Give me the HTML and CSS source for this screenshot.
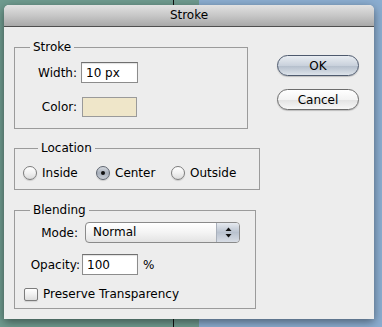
FILE: index.html
```html
<!DOCTYPE html>
<html lang="en">
  <head>
    <meta charset="UTF-8" />
    <meta name="viewport" content="width=device-width, initial-scale=1.0" />
    <title>Stroke</title>
    <link rel="stylesheet" href="styles.css">
  </head>
  <body>
    <div class="dialog">
      <header class="titlebar">Stroke</header>
      <main class="dialog-content">
        <div class="panels">
          <fieldset class="group group-stroke">
            <legend>Stroke</legend>
            <div class="stroke-grid">
              <label class="field-label" for="stroke-width">Width:</label>
              <input id="stroke-width" class="text-input input-width" type="text" value="10 px" />
              <span class="field-label">Color:</span>
              <span class="swatch"></span>
            </div>
          </fieldset>

          <fieldset class="group group-location">
            <legend>Location</legend>
            <div class="radio-row">
              <label class="radio-option"><span class="radio"></span>Inside</label>
              <label class="radio-option"><span class="radio radio-checked"></span>Center</label>
              <label class="radio-option"><span class="radio"></span>Outside</label>
            </div>
          </fieldset>

          <fieldset class="group group-blending">
            <legend>Blending</legend>
            <div class="form-row">
              <span class="field-label label-mode">Mode:</span>
              <div class="select">
                <span class="select-value">Normal</span>
                <span class="select-arrows">
                  <svg width="7" height="11" viewBox="0 0 7 11">
                    <path d="M3.5 0.5 L6.5 4 L0.5 4 Z" fill="#111" />
                    <path d="M0.5 7 L6.5 7 L3.5 10.5 Z" fill="#111" />
                  </svg>
                </span>
              </div>
            </div>
            <div class="form-row row-opacity">
              <label class="field-label label-opacity" for="opacity">Opacity:</label>
              <input id="opacity" class="text-input input-opacity" type="text" value="100" />
              <span class="unit">%</span>
            </div>
            <label class="check-row"><span class="checkbox"></span>Preserve Transparency</label>
          </fieldset>
        </div>

        <div class="actions">
          <button class="btn btn-default">OK</button>
          <button class="btn">Cancel</button>
        </div>
      </main>
    </div>
  </body>
</html>
```

FILE: styles.css
```css
html,
body {
  margin: 0;
  height: 100%;
}

body {
  font-family: "DejaVu Sans", Verdana, sans-serif;
  font-size: 12px;
  color: #000;
  box-sizing: border-box;
  padding: 5px 0 0 4px;
  overflow: hidden;
  background:
    linear-gradient(to right, transparent 173px, #111 173px, #111 174px, transparent 174px),
    linear-gradient(to right, #6f9b8f 199px, #8badd0 199px);
}

.dialog {
  width: 370px;
  height: 314px;
  background-color: #ededed;
  border-radius: 5px 5px 0 0;
  box-shadow: 0 3px 10px rgba(0, 0, 0, 0.45);
  display: flex;
  flex-direction: column;
}

.titlebar {
  height: 21px;
  line-height: 21px;
  text-align: center;
  background: linear-gradient(#e2e2e2, #c4c4c4 55%, #a9a9a9);
  border-bottom: 1px solid #4f4f4f;
  border-radius: 5px 5px 0 0;
}

.dialog-content {
  display: flex;
  padding: 12px 15px 0 10px;
}

.panels {
  display: flex;
  flex-direction: column;
}

.group {
  box-sizing: border-box;
  margin: 0;
  border: 1px solid #9b9b9b;
  padding: 0;
}

.group legend {
  margin-left: 15px;
  padding: 0 3px;
  line-height: 16px;
}

.group-stroke {
  width: 234px;
  padding: 7px 0 11px 0;
}

.group-location {
  width: 246px;
  margin-top: 11px;
  padding: 8px 0 7px 8px;
}

.group-blending {
  width: 242px;
  margin-top: 12px;
  padding: 4px 0 7px 0;
}

.field-label {
  text-align: right;
}

/* stroke */

.stroke-grid {
  display: grid;
  grid-template-columns: 62px auto;
  column-gap: 4px;
  row-gap: 14px;
  align-items: center;
}

.text-input {
  box-sizing: border-box;
  height: 21px;
  margin: 0;
  padding: 0 4px;
  font: inherit;
  color: #000;
  background-color: #fff;
  border: 1px solid #8c8c8c;
  border-top-color: #6f6f6f;
  box-shadow: inset 0 1px 1px rgba(0, 0, 0, 0.12);
  outline: none;
}

.input-width {
  width: 57px;
}

.swatch {
  box-sizing: border-box;
  width: 55px;
  height: 20px;
  margin-left: 1px;
  background-color: #efe6c9;
  border: 1px solid #9a9a9a;
}

/* location */

.radio-row {
  display: grid;
  grid-template-columns: 73px 75px auto;
  height: 18px;
  align-items: center;
}

.radio-option {
  display: flex;
  align-items: center;
  gap: 5px;
}

.radio {
  box-sizing: border-box;
  width: 14px;
  height: 14px;
  border-radius: 50%;
  border: 1px solid #7c7c7c;
  background: linear-gradient(#ffffff, #f1f1f1 50%, #dcdcdc);
  box-shadow: 0 1px 1px rgba(0, 0, 0, 0.15);
  display: flex;
  align-items: center;
  justify-content: center;
}

.radio-checked {
  border-color: #5e6570;
  background: linear-gradient(#d5d9df, #a7afbb 50%, #c9ced6);
}

.radio-checked::after {
  content: "";
  width: 4px;
  height: 4px;
  border-radius: 50%;
  background-color: #111;
}

/* blending */

.form-row {
  display: flex;
  align-items: center;
}

.label-mode {
  width: 63px;
  margin-right: 7px;
}

.select {
  box-sizing: border-box;
  width: 155px;
  height: 21px;
  display: flex;
  border: 1px solid #8a8a8a;
  border-radius: 4px;
  background: linear-gradient(#ffffff, #f4f4f4 50%, #e3e3e3);
  overflow: hidden;
}

.select-value {
  flex: 1;
  padding-left: 7px;
  line-height: 19px;
}

.select-arrows {
  width: 22px;
  display: flex;
  align-items: center;
  justify-content: center;
  border-left: 1px solid #a9b0bb;
  background: linear-gradient(#e6eaf0, #b9c2cf 50%, #d8dde5);
}

.row-opacity {
  margin-top: 11px;
}

.label-opacity {
  width: 65px;
  margin-right: 2px;
}

.input-opacity {
  width: 56px;
}

.unit {
  margin-left: 5px;
}

.check-row {
  display: flex;
  align-items: center;
  gap: 5px;
  height: 14px;
  margin-top: 12px;
  padding-left: 9px;
}

.checkbox {
  box-sizing: border-box;
  width: 14px;
  height: 13px;
  border: 1px solid #7c7c7c;
  border-radius: 2px;
  background: linear-gradient(#ffffff, #f0f0f0 50%, #dddddd);
  box-shadow: 0 1px 1px rgba(0, 0, 0, 0.12);
}

/* buttons */

.actions {
  margin-left: auto;
  padding-top: 16px;
  display: flex;
  flex-direction: column;
  gap: 13px;
}

.btn {
  box-sizing: border-box;
  width: 82px;
  height: 21px;
  padding: 0;
  font: inherit;
  color: #000;
  border: 1px solid #6c6c6c;
  border-radius: 11px;
  background: linear-gradient(#ffffff, #f3f3f3 50%, #e2e2e2 51%, #f7f7f7);
  box-shadow: 0 1px 1px rgba(0, 0, 0, 0.2);
  cursor: pointer;
}

.btn-default {
  border-color: #4e5a6e;
  background: linear-gradient(#e9edf2, #c9d1dc 50%, #b3bdcb 51%, #dde3ea);
}
```
